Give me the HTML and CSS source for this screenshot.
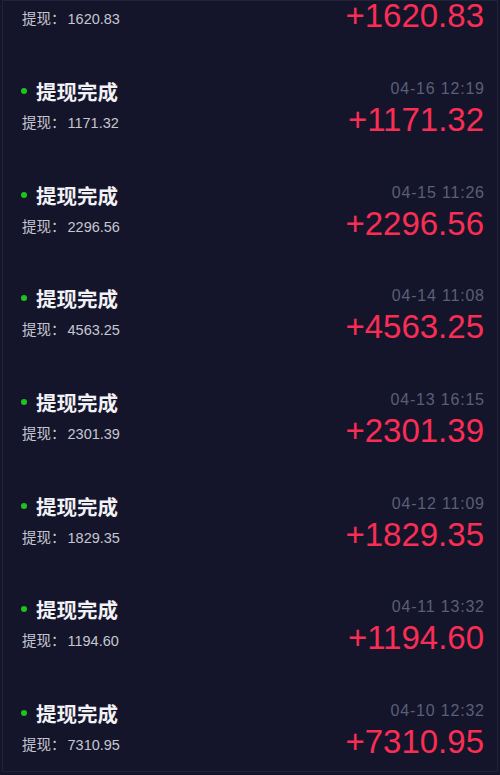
FILE: index.html
```html
<!DOCTYPE html>
<html>
<head>
    <title>提现记录</title>
    <meta name="viewport" content="width=device-width, initial-scale=1.0">
    <link rel="stylesheet" href="styles.css">
</head>
<body>
    <!-- 提现记录列表（已向下滚动） -->
    <div class="frame">
        <div class="list">
            <div class="item">
                <div class="item-head">
                    <div class="title"><span class="dot"></span>提现完成</div>
                    <div class="time">04-17 10:41</div>
                </div>
                <div class="item-body">
                    <div class="sub">提现：<span class="num">1620.83</span></div>
                    <div class="amount">+1620.83</div>
                </div>
            </div>
            <div class="item">
                <div class="item-head">
                    <div class="title"><span class="dot"></span>提现完成</div>
                    <div class="time">04-16 12:19</div>
                </div>
                <div class="item-body">
                    <div class="sub">提现：<span class="num">1171.32</span></div>
                    <div class="amount">+1171.32</div>
                </div>
            </div>
            <div class="item">
                <div class="item-head">
                    <div class="title"><span class="dot"></span>提现完成</div>
                    <div class="time">04-15 11:26</div>
                </div>
                <div class="item-body">
                    <div class="sub">提现：<span class="num">2296.56</span></div>
                    <div class="amount">+2296.56</div>
                </div>
            </div>
            <div class="item">
                <div class="item-head">
                    <div class="title"><span class="dot"></span>提现完成</div>
                    <div class="time">04-14 11:08</div>
                </div>
                <div class="item-body">
                    <div class="sub">提现：<span class="num">4563.25</span></div>
                    <div class="amount">+4563.25</div>
                </div>
            </div>
            <div class="item">
                <div class="item-head">
                    <div class="title"><span class="dot"></span>提现完成</div>
                    <div class="time">04-13 16:15</div>
                </div>
                <div class="item-body">
                    <div class="sub">提现：<span class="num">2301.39</span></div>
                    <div class="amount">+2301.39</div>
                </div>
            </div>
            <div class="item">
                <div class="item-head">
                    <div class="title"><span class="dot"></span>提现完成</div>
                    <div class="time">04-12 11:09</div>
                </div>
                <div class="item-body">
                    <div class="sub">提现：<span class="num">1829.35</span></div>
                    <div class="amount">+1829.35</div>
                </div>
            </div>
            <div class="item">
                <div class="item-head">
                    <div class="title"><span class="dot"></span>提现完成</div>
                    <div class="time">04-11 13:32</div>
                </div>
                <div class="item-body">
                    <div class="sub">提现：<span class="num">1194.60</span></div>
                    <div class="amount">+1194.60</div>
                </div>
            </div>
            <div class="item">
                <div class="item-head">
                    <div class="title"><span class="dot"></span>提现完成</div>
                    <div class="time">04-10 12:32</div>
                </div>
                <div class="item-body">
                    <div class="sub">提现：<span class="num">7310.95</span></div>
                    <div class="amount">+7310.95</div>
                </div>
            </div>
        </div>
    </div>
</body>
</html>
```

FILE: styles.css
```css
/* 全局样式 */
body {
    margin: 0;
    background-color: #14152a;
    font-family: "Liberation Sans", "Noto Sans CJK SC", sans-serif;
}

/* 外框 */
.frame {
    margin: 0 2px;
    height: 770px;
    border: 1px solid #202338;
    overflow: hidden;
}
.list {
    margin-top: -46.67px; /* 列表已滚动 */
}

/* 单条记录 */
.item {
    padding: 22px 13px 27.67px 18px;
}
.item-head {
    display: flex;
    justify-content: space-between;
    align-items: center;
    height: 26px;
}
.title {
    display: flex;
    align-items: center;
    font-family: "Noto Sans CJK SC", sans-serif;
    font-size: 20.5px;
    font-weight: 700;
    line-height: 26px;
    padding-bottom: 4px;
    color: #f1f1f6;
}
.dot {
    width: 6px;
    height: 6px;
    border-radius: 50%;
    background: #1bc51b;
    margin-right: 9px;
}
.time {
    font-size: 16px;
    line-height: 18px;
    letter-spacing: 0.8px;
    margin-right: -0.8px;
    padding-bottom: 8px;
    color: #5b5f78;
}

.item-body {
    display: flex;
    justify-content: space-between;
    align-items: center;
    height: 28px;
}
.sub {
    font-size: 14.5px;
    line-height: 18px;
    padding-top: 6px;
    padding-left: 1px;
    color: #c6c7d0;
}
.num {
    margin-left: 2px;
}
.amount {
    font-size: 33px;
    line-height: 28px;
    color: #fa2d55;
}
```
